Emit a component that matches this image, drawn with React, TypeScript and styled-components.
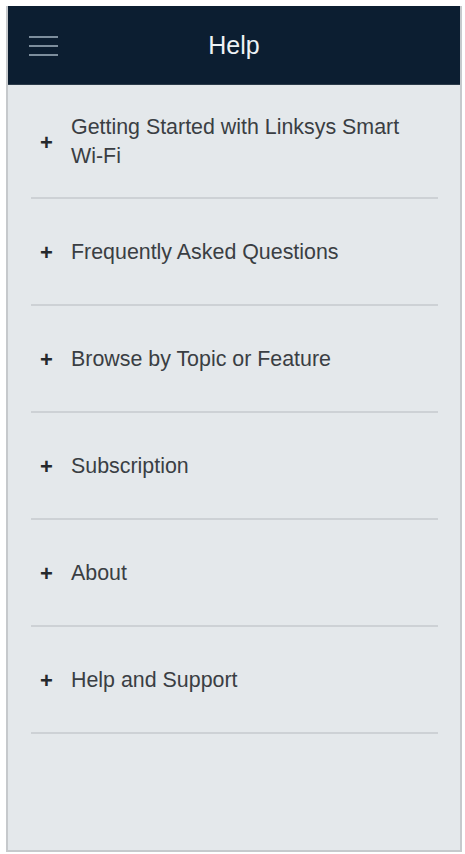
import React from 'react';
import styled, { createGlobalStyle } from 'styled-components';

const GlobalStyle = createGlobalStyle`
  html, body {
    margin: 0;
    padding: 0;
    background: #ffffff;
  }
`;

const Frame = styled.div`
  box-sizing: border-box;
  width: 456px;
  height: 846px;
  margin: 6px 0 0 6px;
  background: #e4e8eb;
  border-left: 2px solid #c6c9cc;
  border-right: 2px solid #c6c9cc;
  border-bottom: 2px solid #c6c9cc;
  display: flex;
  flex-direction: column;
  font-family: 'Liberation Sans', Arial, sans-serif;
`;

const Header = styled.header`
  position: relative;
  height: 78px;
  flex-shrink: 0;
  background: #0c1e31;
  border-bottom: 1px solid #2c3b4a;
  display: flex;
  align-items: center;
  justify-content: center;
`;

const MenuButton = styled.button`
  position: absolute;
  left: 21px;
  top: 30px;
  width: 29px;
  padding: 0;
  border: 0;
  background: none;
  display: flex;
  flex-direction: column;
  gap: 7px;
`;

const MenuLine = styled.span`
  display: block;
  height: 2px;
  background: #7d8e9d;
`;

const Title = styled.h1`
  margin: 0;
  color: #eef2f5;
  font-size: 25px;
  font-weight: 400;
`;

const List = styled.ul`
  list-style: none;
  margin: 0;
  padding: 0 22px 0 23px;
`;

const Row = styled.li`
  box-sizing: border-box;
  min-height: 107px;
  padding: 28px 0 26px;
  border-bottom: 2px solid #cdd1d5;
  display: flex;
  align-items: center;
`;

const Plus = styled.span`
  width: 40px;
  flex-shrink: 0;
  padding-left: 9px;
  box-sizing: border-box;
  color: #25292d;
  font-size: 22px;
  font-weight: 700;
  line-height: 29px;
`;

const Label = styled.span`
  color: #3a3e43;
  font-size: 21.4px;
  line-height: 29px;
`;

const items = [
  'Getting Started with Linksys Smart Wi\u2011Fi',
  'Frequently Asked Questions',
  'Browse by Topic or Feature',
  'Subscription',
  'About',
  'Help and Support',
];

const App: React.FC = () => {
  return (
    <>
      <GlobalStyle />
      <Frame>
        <Header>
          <MenuButton aria-label="Menu">
            <MenuLine />
            <MenuLine />
            <MenuLine />
          </MenuButton>
          <Title>Help</Title>
        </Header>
        <List>
          {items.map((item) => (
            <Row key={item}>
              <Plus>+</Plus>
              <Label>{item}</Label>
            </Row>
          ))}
        </List>
      </Frame>
    </>
  );
};

export default App;
